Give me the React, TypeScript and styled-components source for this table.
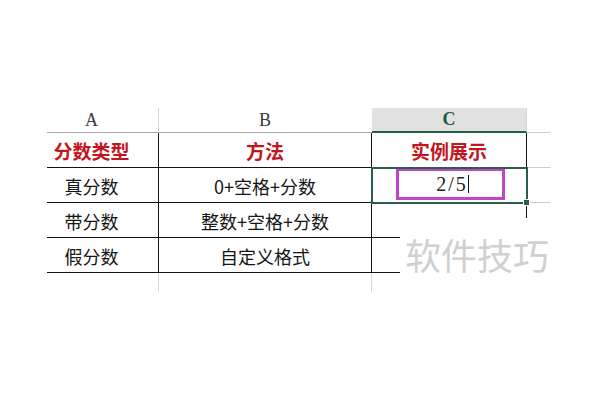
import React from "react";
import styled, { createGlobalStyle } from "styled-components";

const Global = createGlobalStyle`
  html, body { margin: 0; padding: 0; background: #ffffff; }
  body {
    width: 600px; height: 400px; overflow: hidden;
    font-family: "Noto Sans CJK SC", "Noto Sans", sans-serif;
  }
`;

const Page = styled.div`
  position: relative;
  width: 600px;
  height: 400px;
  box-sizing: border-box;
  padding: 108px 0 0 47px;
`;

const Sheet = styled.div`
  display: grid;
  grid-template-columns: 112px 213px 155px 24px;
  grid-template-rows: 25px 35px 35px 35px 35px 19px;
`;

const Cell = styled.div<{ $r?: string; $b?: string; $pr?: number }>`
  box-sizing: border-box;
  display: flex;
  align-items: center;
  justify-content: center;
  border-right: 1px solid ${(p) => p.$r ?? "transparent"};
  border-bottom: 1px solid ${(p) => p.$b ?? "transparent"};
  padding-right: ${(p) => p.$pr ?? 0}px;
  padding-top: 2px;
  font-size: 18px;
  color: #151515;
  white-space: nowrap;
`;

const ColHead = styled(Cell)<{ $active?: boolean }>`
  padding-top: 0;
  font-family: "Liberation Serif", "DejaVu Serif", serif;
  font-size: 18px;
  color: ${(p) => (p.$active ? "#1f5a3c" : "#3a3a3a")};
  font-weight: ${(p) => (p.$active ? 700 : 400)};
  background: ${(p) => (p.$active ? "#e1e1e1" : "transparent")};
  border-bottom: ${(p) => (p.$active ? "2px solid #22603f" : undefined)};
`;

const Title = styled(Cell)`
  padding-top: 0;
  color: #c2161f;
  font-weight: 700;
  font-size: 19px;
`;

const Selected = styled.div`
  position: relative;
  box-sizing: border-box;
  display: flex;
  align-items: flex-start;
  justify-content: flex-start;
  padding-left: 24px;
  outline: 2px solid #2b5e47;
  outline-offset: -1px;
`;

const Handle = styled.span`
  position: absolute;
  right: -3px;
  bottom: -3px;
  width: 5px;
  height: 5px;
  background: #2b5e47;
  border: 1px solid #ffffff;
`;

const Mark = styled.div`
  box-sizing: border-box;
  width: 109px;
  height: 32px;
  border: 3px solid #c045c9;
  display: flex;
  align-items: center;
  justify-content: center;
  padding-left: 4px;
  font-family: "Liberation Serif", "DejaVu Serif", serif;
  font-size: 20px;
  letter-spacing: 2px;
  color: #222;
`;

const Caret = styled.span`
  display: inline-block;
  width: 1px;
  height: 18px;
  background: #111;
`;

const Watermark = styled.div`
  position: absolute;
  left: 400px;
  top: 218px;
  width: 160px;
  height: 72px;
  background: #ffffff;
  display: flex;
  align-items: center;
  padding-left: 5px;
  box-sizing: border-box;
  font-family: "Noto Sans CJK SC", sans-serif;
  font-weight: 400;
  font-size: 36px;
  color: #d0d0d0;
  white-space: nowrap;
`;

const BLACK = "#111111";
const GRID = "#a9a9a9";
const FAINT = "#d6d6d6";

export default function App() {
  return (
    <>
      <Global />
      <Page>
        <Sheet>
          <ColHead $r={FAINT} $b={GRID} $pr={22}>A</ColHead>
          <ColHead $b={GRID}>B</ColHead>
          <ColHead $active $r={FAINT}>C</ColHead>
          <ColHead $b="#cccccc" />

          <Title $r={BLACK} $b={BLACK} $pr={22}>分数类型</Title>
          <Title $r={BLACK} $b={BLACK}>方法</Title>
          <Title $r={BLACK}>实例展示</Title>
          <Cell $b="#cccccc" />

          <Cell $r={BLACK} $b={BLACK} $pr={22}>真分数</Cell>
          <Cell $r={BLACK} $b={BLACK}>0+空格+分数</Cell>
          <Selected>
            <Mark>
              2/5<Caret />
            </Mark>
            <Handle />
          </Selected>
          <Cell $b="#cccccc" />

          <Cell $r={BLACK} $b={BLACK} $pr={22}>带分数</Cell>
          <Cell $r={BLACK} $b={BLACK}>整数+空格+分数</Cell>
          <Cell $r={BLACK} $b={BLACK} />
          <Cell />

          <Cell $r={BLACK} $b={BLACK} $pr={22}>假分数</Cell>
          <Cell $r={BLACK} $b={BLACK}>自定义格式</Cell>
          <Cell $r={BLACK} $b={BLACK} />
          <Cell />

          <Cell $r={FAINT} $pr={22} />
          <Cell $r={FAINT} />
          <Cell />
          <Cell />
        </Sheet>
        <Watermark>软件技巧</Watermark>
      </Page>
    </>
  );
}
